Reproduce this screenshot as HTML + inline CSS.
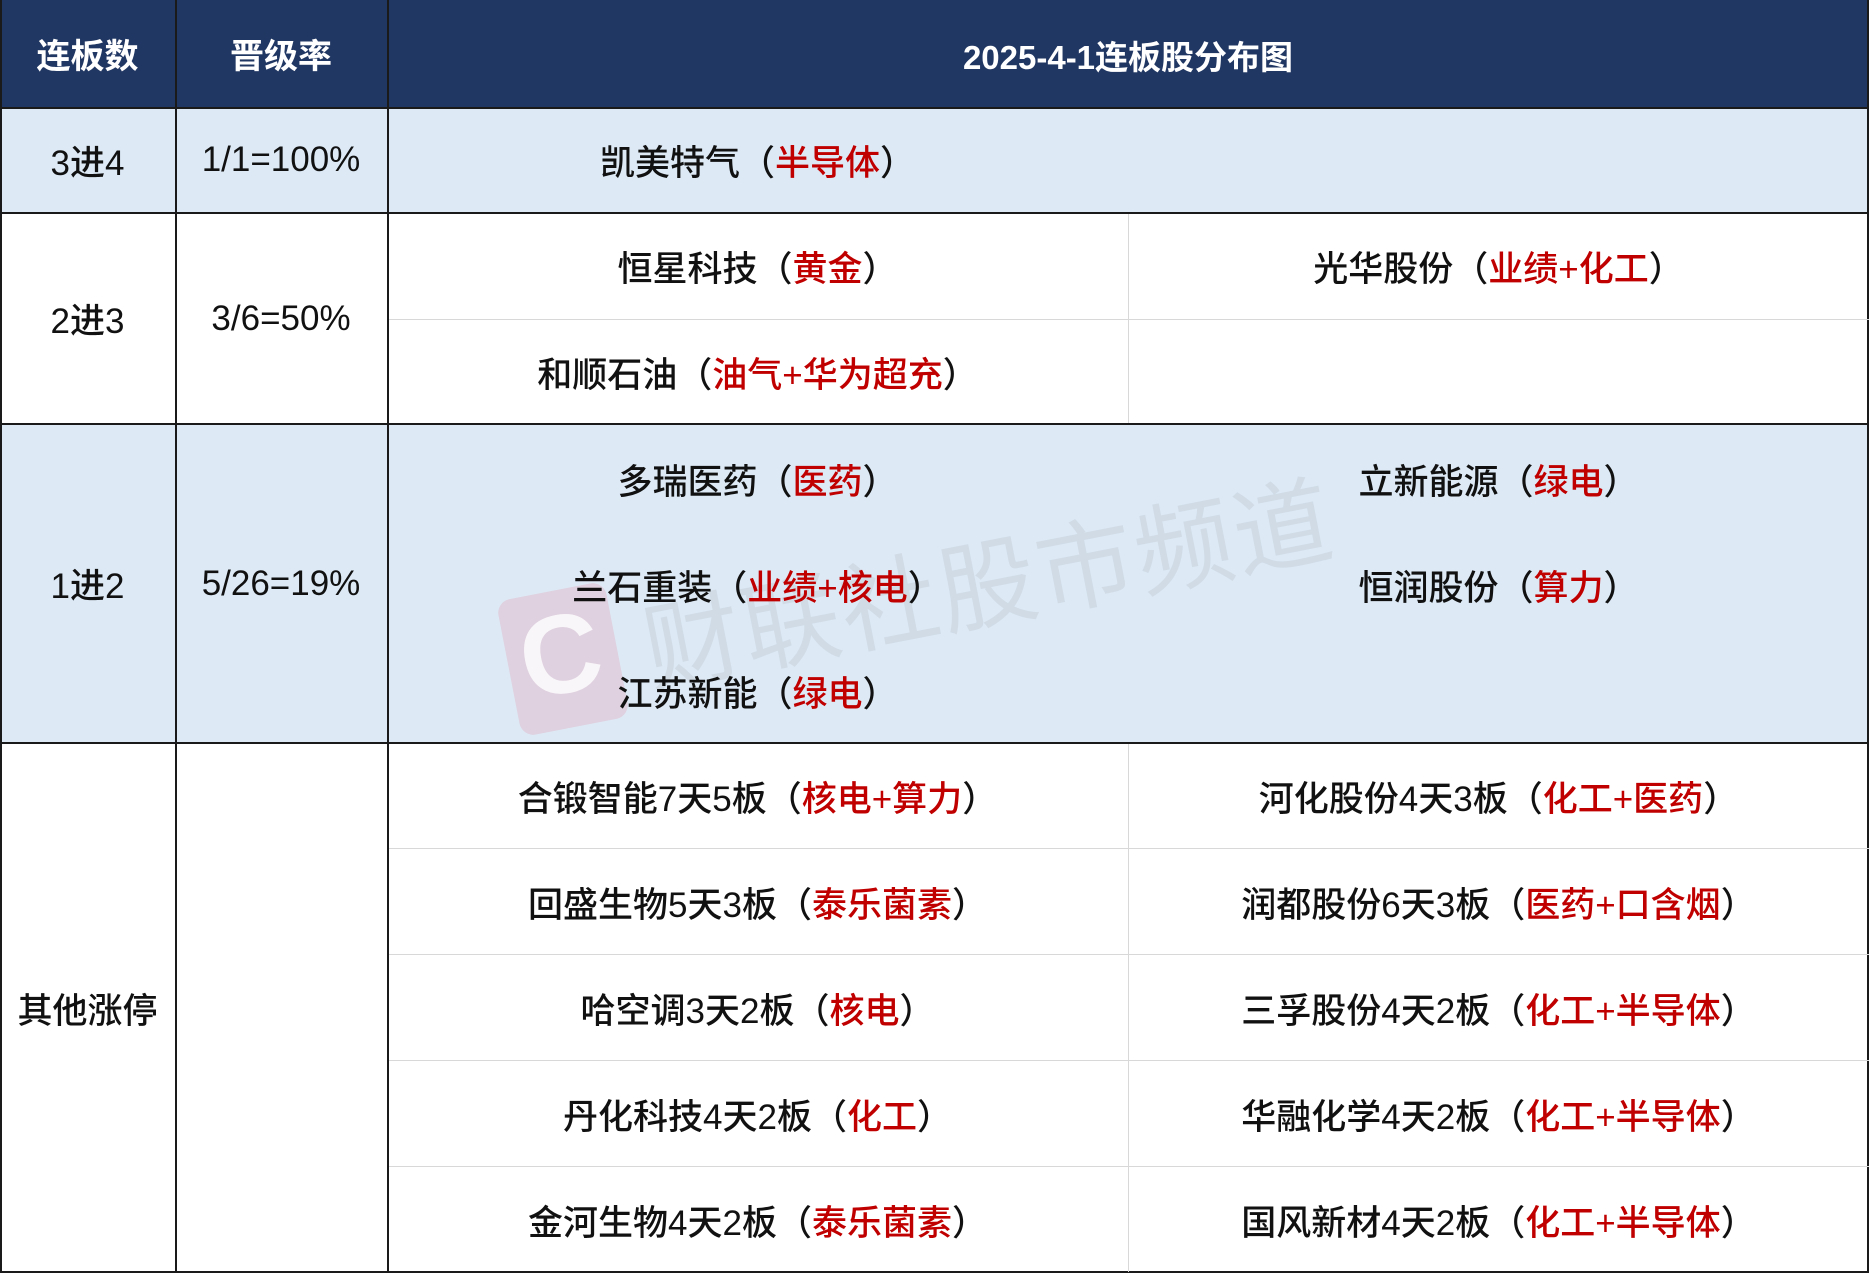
<!DOCTYPE html>
<html><head><meta charset="utf-8"><style>
*{margin:0;padding:0;box-sizing:border-box}
body{width:1869px;height:1273px;background:#fff;position:relative;overflow:hidden;font-family:"Liberation Sans","Noto Sans CJK SC",sans-serif;font-weight:500;font-size:35px;color:#111}
.c{position:absolute;display:flex;align-items:center;justify-content:center;white-space:nowrap}
.r{color:#c00000}
.h{color:#fff;font-weight:700;font-size:34px}
.bg{position:absolute}
.l{position:absolute;background:#1a1a1a}
.lg{position:absolute;background:#d8d8d8}
.wm{position:absolute;left:630px;top:575px;font-size:98px;color:rgba(120,120,120,0.13);transform:rotate(-11deg);transform-origin:left top;font-weight:400;letter-spacing:2px}
</style></head><body>
<div class="bg" style="left:0;top:0;width:1869px;height:107px;background:#213763"></div>
<div class="bg" style="left:0;top:107px;width:1869px;height:106px;background:#ddeaf6"></div>
<div class="bg" style="left:0;top:424px;width:1869px;height:319px;background:#ddeaf6"></div>

<div class="wm">财联社股市频道</div>
<div style="position:absolute;left:508px;top:590px;width:110px;height:138px;background:rgba(235,110,135,0.2);border-radius:14px;transform:rotate(-11deg)"></div>
<div style="position:absolute;left:520px;top:590px;font-size:112px;font-weight:900;color:rgba(255,255,255,0.8);transform:rotate(-11deg)">C</div>

<div class="l" style="left:0;top:107px;width:1869px;height:2px"></div>
<div class="l" style="left:0;top:212px;width:1869px;height:2px"></div>
<div class="l" style="left:0;top:423px;width:1869px;height:2px"></div>
<div class="l" style="left:0;top:742px;width:1869px;height:2px"></div>
<div class="l" style="left:0;top:1271px;width:1869px;height:2px"></div>
<div class="l" style="left:175px;top:0;width:2px;height:1273px"></div>
<div class="l" style="left:387px;top:0;width:2px;height:1273px"></div>
<div class="l" style="left:0;top:0;width:2px;height:1273px"></div>
<div class="l" style="left:1867px;top:0;width:2px;height:1273px"></div>
<div class="lg" style="left:1128px;top:214px;width:1px;height:209px"></div>
<div class="lg" style="left:1128px;top:744px;width:1px;height:528px"></div>
<div class="lg" style="left:389px;top:319px;width:1480px;height:1px"></div>
<div class="lg" style="left:389px;top:848px;width:1480px;height:1px"></div>
<div class="lg" style="left:389px;top:954px;width:1480px;height:1px"></div>
<div class="lg" style="left:389px;top:1060px;width:1480px;height:1px"></div>
<div class="lg" style="left:389px;top:1166px;width:1480px;height:1px"></div>

<div class="c h" style="left:0;top:0;width:175px;height:107px">连板数</div>
<div class="c h" style="left:175px;top:0;width:212px;height:107px">晋级率</div>
<div class="c h" style="left:387px;top:0;width:1482px;height:110px;font-size:33px">2025-4-1连板股分布图</div>

<div class="c" style="left:0;top:107px;width:175px;height:106px">3进4</div>
<div class="c" style="left:175px;top:107px;width:212px;height:106px">1/1=100%</div>
<div class="c" style="left:387px;top:107px;width:741px;height:106px">凯美特气（<span class="r">半导体</span>）</div>

<div class="c" style="left:0;top:213px;width:175px;height:211px">2进3</div>
<div class="c" style="left:175px;top:213px;width:212px;height:211px">3/6=50%</div>
<div class="c" style="left:387px;top:213px;width:741px;height:106px">恒星科技（<span class="r">黄金</span>）</div>
<div class="c" style="left:1128px;top:213px;width:741px;height:106px">光华股份（<span class="r">业绩+化工</span>）</div>
<div class="c" style="left:387px;top:319px;width:741px;height:106px">和顺石油（<span class="r">油气+华为超充</span>）</div>

<div class="c" style="left:0;top:424px;width:175px;height:319px">1进2</div>
<div class="c" style="left:175px;top:424px;width:212px;height:319px">5/26=19%</div>
<div class="c" style="left:387px;top:426px;width:741px;height:106px">多瑞医药（<span class="r">医药</span>）</div>
<div class="c" style="left:1128px;top:426px;width:741px;height:106px">立新能源（<span class="r">绿电</span>）</div>
<div class="c" style="left:387px;top:532px;width:741px;height:106px">兰石重装（<span class="r">业绩+核电</span>）</div>
<div class="c" style="left:1128px;top:532px;width:741px;height:106px">恒润股份（<span class="r">算力</span>）</div>
<div class="c" style="left:387px;top:638px;width:741px;height:106px">江苏新能（<span class="r">绿电</span>）</div>

<div class="c" style="left:0;top:743px;width:175px;height:530px">其他涨停</div>
<div class="c" style="left:387px;top:743px;width:741px;height:106px">合锻智能7天5板（<span class="r">核电+算力</span>）</div>
<div class="c" style="left:1128px;top:743px;width:741px;height:106px">河化股份4天3板（<span class="r">化工+医药</span>）</div>
<div class="c" style="left:387px;top:849px;width:741px;height:106px">回盛生物5天3板（<span class="r">泰乐菌素</span>）</div>
<div class="c" style="left:1128px;top:849px;width:741px;height:106px">润都股份6天3板（<span class="r">医药+口含烟</span>）</div>
<div class="c" style="left:387px;top:955px;width:741px;height:106px">哈空调3天2板（<span class="r">核电</span>）</div>
<div class="c" style="left:1128px;top:955px;width:741px;height:106px">三孚股份4天2板（<span class="r">化工+半导体</span>）</div>
<div class="c" style="left:387px;top:1061px;width:741px;height:106px">丹化科技4天2板（<span class="r">化工</span>）</div>
<div class="c" style="left:1128px;top:1061px;width:741px;height:106px">华融化学4天2板（<span class="r">化工+半导体</span>）</div>
<div class="c" style="left:387px;top:1167px;width:741px;height:106px">金河生物4天2板（<span class="r">泰乐菌素</span>）</div>
<div class="c" style="left:1128px;top:1167px;width:741px;height:106px">国风新材4天2板（<span class="r">化工+半导体</span>）</div>
</body></html>
